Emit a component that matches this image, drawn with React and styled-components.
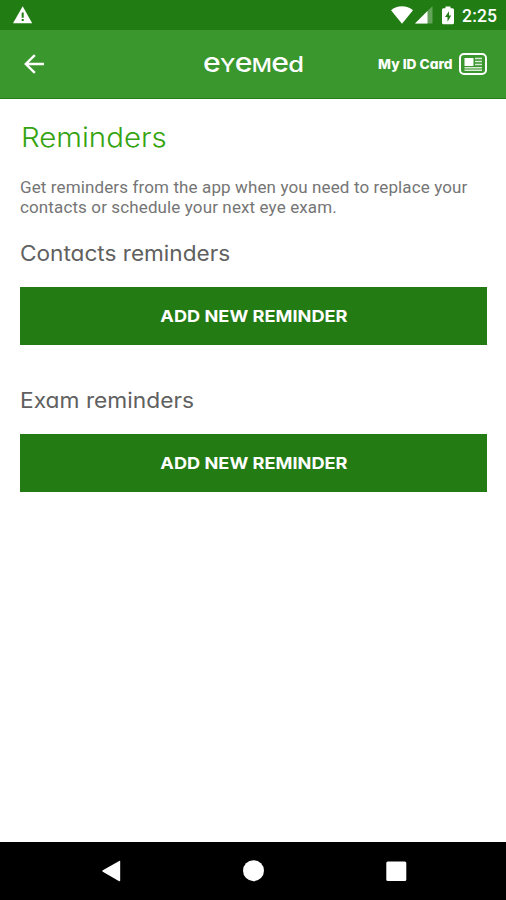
import styled, { createGlobalStyle } from "styled-components";

const sections = [
  { title: "Contacts reminders", stretch: 1.076 },
  { title: "Exam reminders", stretch: 1.084 },
];

export default function App() {
  return (
    <>
      <GlobalStyle />
      <Screen>
        <StatusBar>
          <WarningIcon />
          <StatusIcons>
            <WifiIcon />
            <SignalIcon />
            <BatteryIcon />
            <Clock>2:25</Clock>
          </StatusIcons>
        </StatusBar>
        <Header>
          <BackButton aria-label="Back">
            <BackIcon />
          </BackButton>
          <Logo>
            e<b>Y</b>e<b>M</b>e<i>d</i>
          </Logo>
          <IdCard>
            <Wide $stretch={1.055} $origin="right">
              My ID Card
            </Wide>
            <CardIcon />
          </IdCard>
        </Header>
        <Content>
          <Title>
            <Wide $stretch={1.07}>Reminders</Wide>
          </Title>
          <Intro>
            <Line>Get reminders from the app when you need to replace your</Line>
            <Line>contacts or schedule your next eye exam.</Line>
          </Intro>
          {sections.map(({ title, stretch }) => (
            <Section key={title}>
              <SectionTitle>
                <Wide $stretch={stretch}>{title}</Wide>
              </SectionTitle>
              <AddButton>
                <Wide $stretch={1.102} $origin="center">
                  ADD NEW REMINDER
                </Wide>
              </AddButton>
            </Section>
          ))}
        </Content>
        <NavBar>
          <NavIcon viewBox="0 0 24 24">
            <path d="M3.800 11.200 20.200 2q1-.5 1 .6v19q0 1.100-1 .6L3.800 12.800q-1.200-.8 0-1.600Z" />
          </NavIcon>
          <NavIcon viewBox="0 0 24 24">
            <circle cx="11.500" cy="11.700" r="10.500" />
          </NavIcon>
          <NavIcon viewBox="0 0 24 24">
            <rect x="2.300" y="2.500" width="20" height="19.500" rx="1.500" />
          </NavIcon>
        </NavBar>
      </Screen>
    </>
  );
}

const WarningIcon = () => (
  <svg width="20" height="18" viewBox="0 0 20 18">
    <path d="M9.700 0.300 19.200 17.300H0Z" fill="#fff" />
    <path d="M8.700 6.500h2v5.300h-2zM8.700 13h2v2h-2z" fill="#217c14" />
  </svg>
);

const WifiIcon = () => (
  <svg width="22" height="18" viewBox="0 0 22 18">
    <path d="M0 4.200Q4.700 0.300 11 0.300T22 4.200L11 17.800Z" fill="#fff" />
  </svg>
);

const SignalIcon = () => (
  <svg width="18" height="18" viewBox="0 0 18 18">
    <path d="M17.500 0v17.500H0Z" fill="#fff" opacity="0.300" />
    <path d="M12.500 5v12.500H0Z" fill="#fff" />
  </svg>
);

const BatteryIcon = () => (
  <svg width="12" height="19" viewBox="0 0 12 19">
    <path
      d="M3.500 0.500h5v1.700h2q1.500 0 1.500 1.500v13q0 1.500-1.500 1.500h-9Q0 18.200 0 16.700v-13q0-1.500 1.500-1.500h2Z"
      fill="#fff"
    />
    <path d="M7 5.200 3 11h2.500v4.800L9.200 9.600H7Z" fill="#217c14" />
  </svg>
);

const BackIcon = () => (
  <svg width="22" height="22" viewBox="0 0 22 22">
    <path
      d="M21 11H3M11.800 2.200 2.800 11l9 8.800"
      fill="none"
      stroke="#fff"
      strokeWidth="2.400"
    />
  </svg>
);

const CardIcon = () => (
  <svg width="28" height="22" viewBox="0 0 28 22">
    <rect
      x="1"
      y="1"
      width="26"
      height="20"
      rx="4"
      fill="none"
      stroke="#fff"
      strokeWidth="2"
    />
    <path d="M5.500 5h9v8h-9z" fill="#fff" />
    <path
      d="M16 5.500h7M16 8.500h7M16 11.500h7M5.500 14.700h17.500M5.500 17.300h17.500"
      stroke="#fff"
      strokeWidth="1.500"
      opacity="0.800"
    />
  </svg>
);

const GlobalStyle = createGlobalStyle`
  * {
    box-sizing: border-box;
    margin: 0;
    padding: 0;
  }
  body {
    background: #fff;
    font-family: Inter, "Open Sans", sans-serif;
    font-feature-settings: "cv11" 1;
  }
  svg {
    display: block;
    flex-shrink: 0;
  }
`;

const Screen = styled.div`
  display: flex;
  flex-direction: column;
  width: 506px;
  height: 900px;
  overflow: hidden;
`;

const Wide = styled.span`
  display: inline-block;
  transform: scaleX(${({ $stretch }) => $stretch});
  transform-origin: ${({ $origin }) => $origin || "left"} center;
  white-space: nowrap;
`;

const StatusBar = styled.div`
  display: flex;
  align-items: center;
  justify-content: space-between;
  height: 30px;
  padding: 0 9px 0 13px;
  background: #217c14;
`;

const StatusIcons = styled.div`
  display: flex;
  align-items: center;
  svg:nth-child(2) {
    margin-left: 2px;
  }
  svg:nth-child(3) {
    margin-left: 9px;
  }
`;

const Clock = styled.span`
  width: 35px;
  margin-left: 8px;
  font: 500 17.5px/30px Roboto, sans-serif;
  letter-spacing: 0.2px;
  color: #fff;
  padding-top: 2px;
`;

const Header = styled.header`
  display: grid;
  grid-template-columns: 1fr auto 1fr;
  align-items: center;
  height: 69px;
  padding: 0 19px;
  background: #3a972e;
  border-bottom: 1px solid #218018;
  color: #fff;
`;

const BackButton = styled.button`
  width: 22px;
  margin-left: 4px;
  border: 0;
  background: none;
`;

const Logo = styled.div`
  font-size: 26px;
  font-weight: 500;
  line-height: 28px;
  letter-spacing: -0.6px;
  white-space: nowrap;
  transform: scaleX(1.16);
  b {
    font-size: 19px;
    font-weight: 500;
  }
  i {
    font-size: 22px;
    font-style: normal;
  }
`;

const IdCard = styled.div`
  display: flex;
  align-items: center;
  justify-content: flex-end;
  gap: 6px;
  font-size: 13px;
  font-weight: 800;
`;

const Content = styled.main`
  flex: 1;
  padding: 22px 19px 0 20px;
`;

const Title = styled.h1`
  padding-left: 0.5px;
  font-size: 27.5px;
  font-weight: 300;
  line-height: 32px;
  color: #34a30f;
`;

const Intro = styled.p`
  margin-top: 24px;
  font: 400 17px/20px Roboto, sans-serif;
  color: #757575;
`;

const Line = styled.span`
  display: block;
  letter-spacing: 0.12px;
  white-space: nowrap;
`;

const Section = styled.section`
  margin-top: 24px;
  & + & {
    margin-top: 43px;
  }
`;

const SectionTitle = styled.h2`
  font-size: 21px;
  font-weight: 400;
  line-height: 26px;
  color: #606060;
`;

const AddButton = styled.button`
  display: block;
  width: 100%;
  height: 58px;
  margin-top: 20px;
  border: 0;
  background: #237b14;
  color: #fff;
  font-family: inherit;
  font-feature-settings: inherit;
  font-size: 16.5px;
  font-weight: 700;
`;

const NavBar = styled.nav`
  display: flex;
  align-items: center;
  justify-content: space-between;
  height: 58px;
  padding: 0 98px 0 99px;
  background: #000;
`;

const NavIcon = styled.svg`
  width: 24px;
  height: 24px;
  fill: #fff;
`;
